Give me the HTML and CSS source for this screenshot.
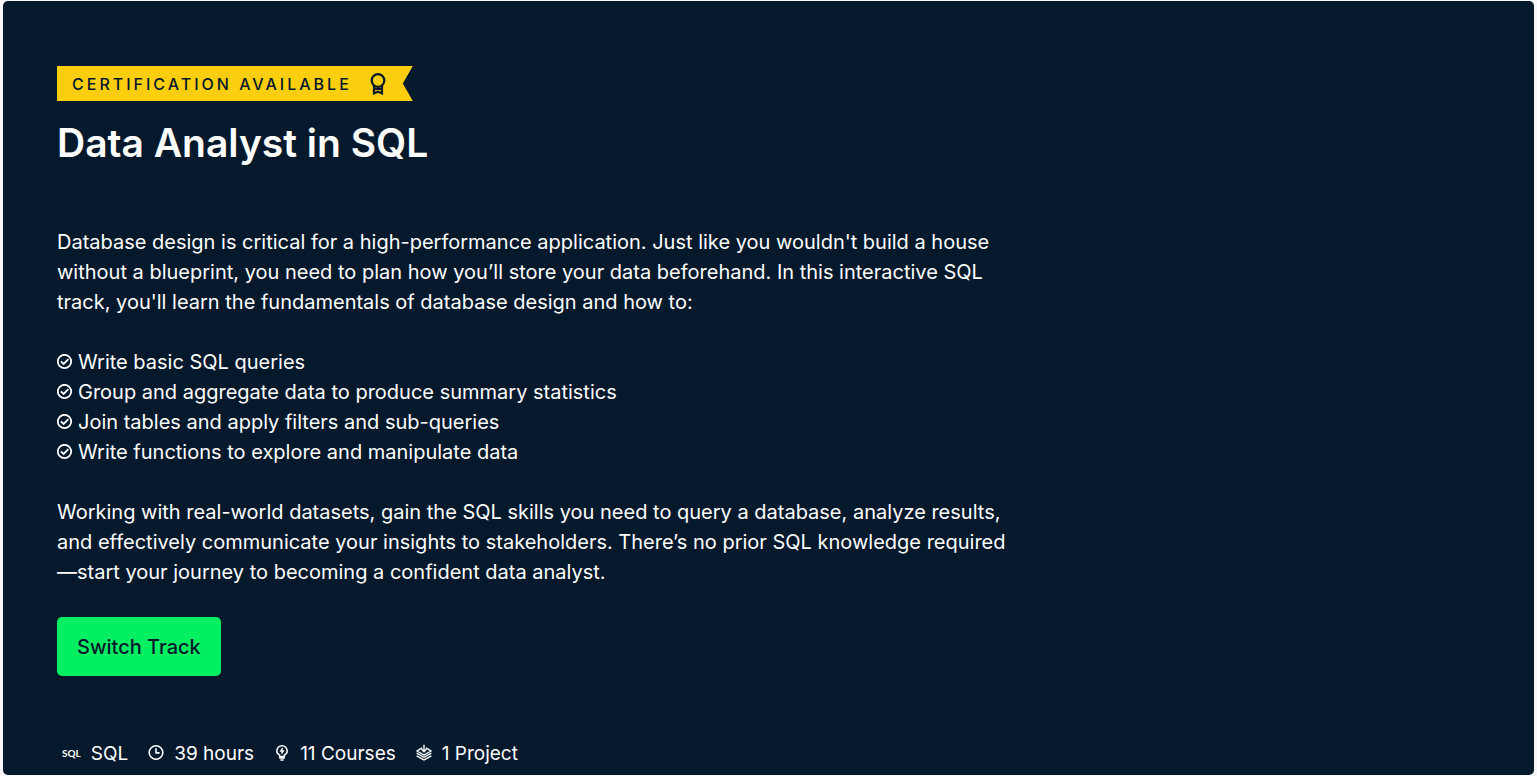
FILE: index.html
```html
<!DOCTYPE html>
<html lang="en">
<head>
<meta charset="utf-8">
<meta name="viewport" content="width=device-width, initial-scale=1">
<title>Data Analyst in SQL</title>
<link rel="stylesheet" href="styles.css">
</head>
<body>
<svg class="defs" aria-hidden="true">
  <symbol id="check" viewBox="0 0 16 16">
    <circle cx="7.500" cy="7.500" r="6.700" fill="none" stroke="currentColor" stroke-width="1.8"/>
    <path d="M3.900 7.300l2.700 2.700 4.800-4.800" fill="none" stroke="currentColor" stroke-width="1.8"/>
  </symbol>
</svg>
<main class="hero">
  <div class="badge">
    <span>CERTIFICATION AVAILABLE</span>
    <svg class="badge-icon" viewBox="0 0 16 22" aria-hidden="true" fill="none" stroke="currentColor" stroke-width="2.2">
      <circle cx="8" cy="7.500" r="6.300"/>
      <path d="M4 13v7.300l4-1.600 4 1.600V13M4 16h8"/>
    </svg>
  </div>
  <h1 class="title">Data Analyst in SQL</h1>
  <div class="description">
    <p>Database design is critical for a high-performance application. Just like you wouldn't build a house<br>without a blueprint, you need to plan how you’ll store your data beforehand. In this interactive SQL<br>track, you'll learn the fundamentals of database design and how to:</p>
    <ul class="goals">
      <li><svg class="icon" aria-hidden="true"><use href="#check"/></svg>Write basic SQL queries</li>
      <li><svg class="icon" aria-hidden="true"><use href="#check"/></svg>Group and aggregate data to produce summary statistics</li>
      <li><svg class="icon" aria-hidden="true"><use href="#check"/></svg>Join tables and apply filters and sub-queries</li>
      <li><svg class="icon" aria-hidden="true"><use href="#check"/></svg>Write functions to explore and manipulate data</li>
    </ul>
    <p>Working with real-world datasets, gain the SQL skills you need to query a database, analyze results,<br>and effectively communicate your insights to stakeholders. There’s no prior SQL knowledge required<br>—start your journey to becoming a confident data analyst.</p>
  </div>
  <button class="switch" type="button">Switch Track</button>
  <ul class="meta">
    <li><span class="sql-mark" aria-hidden="true">SQL</span>SQL</li>
    <li><svg class="icon" viewBox="0 0 16 16" aria-hidden="true" fill="none" stroke="currentColor" stroke-width="1.6"><circle cx="8" cy="6.500" r="6.800"/><path d="M8 2.300v4.600h3.600"/></svg>39 hours</li>
    <li><svg class="icon" viewBox="0 0 16 16" aria-hidden="true" fill="none" stroke="currentColor" stroke-width="1.5"><path d="M5.600 10.500V8.900C4 8.100 2.800 6.700 2.800 4.900a5.200 5.200 0 0 1 10.400 0c0 1.800-1.200 3.200-2.800 4v1.600zM5.200 12.100h5.600M6.400 14.100h3.200M8.700 2.100L6.900 4.900h2.400L7.500 7.700"/></svg>11 Courses</li>
    <li><svg class="icon" viewBox="0 0 16 16" aria-hidden="true" fill="none" stroke="currentColor" stroke-width="1.4"><path d="M6.200 1.800L1 5l7 4 7-4-5.200-3.200M8-1.200v6.700M5.600 3.300L8 5.700l2.400-2.400M.6 7.200L8 11.300l7.400-4.100M.6 9.800L8 13.900l7.400-4.100"/></svg>1 Project</li>
  </ul>
</main>
</body>
</html>
```

FILE: styles.css
```css
* {
  box-sizing: border-box;
}

body {
  margin: 0;
  padding: 1px 3px;
  background: #f7f7fc;
  font-family: Inter, "Liberation Sans", sans-serif;
  font-size: 20px;
  line-height: 30px;
}

.defs {
  position: absolute;
  width: 0;
  height: 0;
}

.hero {
  display: flex;
  flex-direction: column;
  align-items: flex-start;
  padding: 65px 54px 6px;
  border-radius: 5px;
  background: #05192d;
  color: #fff;
}

.badge {
  display: flex;
  align-items: center;
  gap: 18px;
  height: 35px;
  padding: 0 27px 0 15px;
  background: #fcce0d;
  color: #05192d;
  font-size: 16px;
  font-weight: 500;
  letter-spacing: 3px;
  clip-path: polygon(0 0, 100% 0, calc(100% - 10px) 50%, 100% 100%, 0 100%);
}

.badge-icon {
  width: 16px;
  height: 22px;
}

.title {
  margin: 17px 0 59px;
  font-size: 39px;
  line-height: 50px;
  font-weight: 600;
}

.description {
  display: grid;
  gap: 30px;
}

.description p {
  margin: 0;
}

.goals,
.meta {
  margin: 0;
  padding: 0;
  list-style: none;
}

.goals li,
.meta li {
  display: flex;
  align-items: center;
}

.goals li {
  gap: 5px;
}

.icon {
  flex: none;
  width: 16px;
  height: 16px;
  overflow: visible;
}

.switch {
  margin-top: 30px;
  height: 59px;
  padding: 0 20px;
  border: 0;
  border-radius: 5px;
  background: #03ef62;
  color: #05192d;
  font: inherit;
  font-weight: 500;
  cursor: pointer;
}

.meta {
  display: flex;
  gap: 20px;
  margin-top: 63px;
  padding-left: 5px;
  font-size: 19px;
}

.meta li {
  gap: 10px;
}

.sql-mark {
  padding-bottom: 3px;
  font: 700 10px/14px Lato, sans-serif;
}
```
